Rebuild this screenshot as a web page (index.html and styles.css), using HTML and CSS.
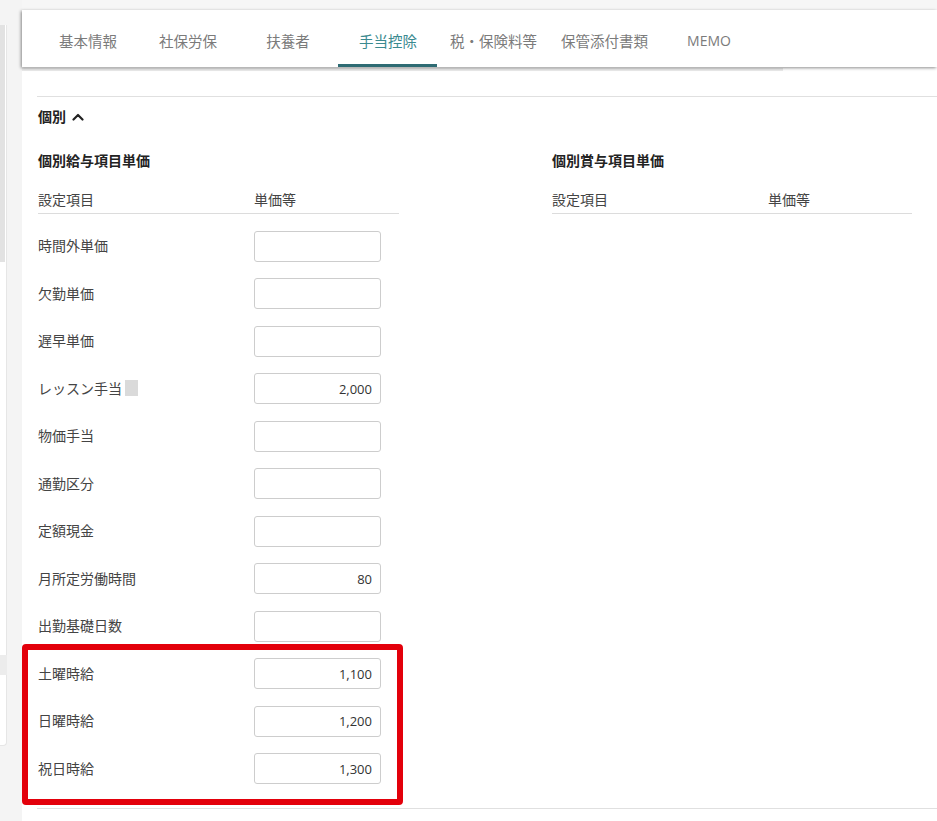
FILE: index.html
```html
<!DOCTYPE html>
<html lang="ja">
<head>
<meta charset="utf-8">
<title>手当控除</title>
<link rel="stylesheet" href="styles.css">
</head>
<body>
<div class="page">
  <aside class="side-stub">
    <div class="side-card">
      <div class="side-thumb"></div>
      <div class="side-gap"></div>
      <div class="side-band"></div>
      <div class="side-end"></div>
    </div>
  </aside>
  <main class="panel">
    <nav class="tabs">
      <a class="tab">基本情報</a>
      <a class="tab">社保労保</a>
      <a class="tab">扶養者</a>
      <a class="tab active">手当控除</a>
      <a class="tab">税・保険料等</a>
      <a class="tab">保管添付書類</a>
      <a class="tab memo">MEMO</a>
    </nav>
    <div class="tabs-shade"></div>
    <section class="content">
      <div class="rule"></div>
      <h2 class="toggle">個別
        <svg class="chev" width="12" height="9" viewBox="0 0 12 9"><polyline points="1.5,7.5 6,3 10.5,7.5" fill="none" stroke="#222" stroke-width="2.2" stroke-linecap="round" stroke-linejoin="round"/></svg>
      </h2>
      <div class="cols">
        <div class="col">
          <h3 class="col-title">個別給与項目単価</h3>
          <div class="thead"><span class="th-label">設定項目</span><span>単価等</span></div>
          <div class="rows">
            <div class="row"><span class="label">時間外単価</span><input class="num" value=""></div>
            <div class="row"><span class="label">欠勤単価</span><input class="num" value=""></div>
            <div class="row"><span class="label">遅早単価</span><input class="num" value=""></div>
            <div class="row"><span class="label">レッスン手当<i class="chip"></i></span><input class="num" value="2,000"></div>
            <div class="row"><span class="label">物価手当</span><input class="num" value=""></div>
            <div class="row"><span class="label">通勤区分</span><input class="num" value=""></div>
            <div class="row"><span class="label">定額現金</span><input class="num" value=""></div>
            <div class="row"><span class="label">月所定労働時間</span><input class="num" value="80"></div>
            <div class="row"><span class="label">出勤基礎日数</span><input class="num" value=""></div>
            <div class="row"><span class="label">土曜時給</span><input class="num" value="1,100"></div>
            <div class="row"><span class="label">日曜時給</span><input class="num" value="1,200"></div>
            <div class="row"><span class="label">祝日時給</span><input class="num" value="1,300"></div>
          </div>
        </div>
        <div class="col right">
          <h3 class="col-title">個別賞与項目単価</h3>
          <div class="thead"><span class="th-label">設定項目</span><span>単価等</span></div>
        </div>
      </div>
      <div class="rule bottom"></div>
    </section>
  </main>
  <div class="highlight"></div>
</div>
</body>
</html>
```

FILE: styles.css
```css
* { box-sizing: border-box; }
html, body { margin: 0; padding: 0; }
body {
  background: #f6f6f6;
  font-family: "Open Sans", "Noto Sans CJK JP", sans-serif;
  font-size: 14px;
  color: #444;
  overflow: hidden;
}
.page {
  position: relative;
  display: flex;
  min-height: 821px;
}
.side-stub {
  width: 22px;
  flex: none;
  background: #f4f4f4;
  padding-top: 25px;
}
.side-card {
  width: 7px;
  background: #fff;
  border-right: 1px solid #e6e6e6;
  border-bottom: 1px solid #e6e6e6;
  border-bottom-right-radius: 4px;
  display: flex;
  flex-direction: column;
}
.side-thumb { height: 237px; width: 5px; background: #e2e2e2; }
.side-gap { height: 393px; }
.side-band { height: 20px; background: #ececec; margin-right: -1px; }
.side-end { height: 70px; }
.panel {
  flex: 1;
  margin-top: 10px;
  background: #fff;
  min-height: 811px;
}
.tabs {
  display: flex;
  height: 57px;
  padding-left: 16px;
  background: #fff;
  box-shadow: -1px 1px 3px rgba(0,0,0,0.45);
  position: relative;
  z-index: 1;
}
.tab {
  min-width: 100px;
  padding: 4px 12px 0;
  display: flex;
  align-items: center;
  justify-content: center;
  color: #7b7b7b;
  font-size: 14.5px;
  position: relative;
  white-space: nowrap;
}
.tab.memo { font-size: 14px; padding-left: 10px; }
.tab.active { color: #3b8a90; }
.tab.active::after {
  content: "";
  position: absolute;
  left: 0;
  right: 1px;
  bottom: 0;
  height: 3px;
  background: #2e6b73;
}
.tabs-shade {
  height: 3px;
  margin-top: 1px;
  margin-right: 154px;
  background: #ebebeb;
}
.content {
  padding-left: 16px;
}
.rule {
  height: 1px;
  background: #e0e0e0;
  margin-top: 25px;
  margin-left: -1px;
}
.toggle {
  margin: 10px 0 0;
  font-size: 14px;
  line-height: 20px;
  font-weight: 700;
  color: #222;
  display: flex;
  align-items: center;
  gap: 6px;
}
.chev { display: block; margin-top: -1px; }
.cols {
  display: grid;
  grid-template-columns: 361px 360px;
  column-gap: 153px;
  margin-top: 24px;
}
.col-title {
  margin: 0;
  font-size: 14px;
  line-height: 20px;
  font-weight: 700;
  color: #222;
}
.thead {
  display: flex;
  margin-top: 19px;
  padding-bottom: 3px;
  line-height: 20px;
  border-bottom: 1px solid #dcdcdc;
  color: #444;
}
.th-label { width: 216px; flex: none; }
.rows { padding-top: 8.5px; }
.row {
  height: 47.5px;
  display: flex;
  align-items: center;
}
.label {
  width: 216px;
  flex: none;
  display: flex;
  align-items: center;
  color: #444;
  margin-top: -2px;
}
.chip {
  display: inline-block;
  width: 13px;
  height: 16px;
  margin-left: 3px;
  background: #dadada;
}
.num {
  width: 127px;
  height: 31px;
  border: 1px solid #cdcdcd;
  border-radius: 3px;
  padding: 0 8px 0 6px;
  text-align: right;
  font-family: "Open Sans", "Noto Sans CJK JP", sans-serif;
  font-size: 13px;
  color: #333;
  background: #fff;
  outline: none;
}
.rule.bottom {
  margin-top: 15.5px;
}
.highlight {
  position: absolute;
  left: 22px;
  top: 644px;
  width: 381px;
  height: 161px;
  border: 6px solid #e3000b;
  border-radius: 4px;
  pointer-events: none;
}
```
